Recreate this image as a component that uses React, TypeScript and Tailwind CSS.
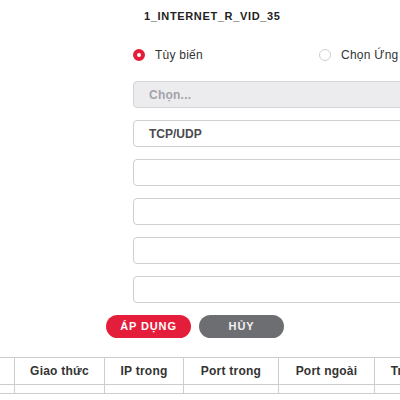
import { Fragment } from 'react'

const fields = ['', 'TCP/UDP', '', '', '', '']

const columns = [
  { label: '', width: 'w-[14px]' },
  { label: 'Giao thức', width: 'w-[90px]' },
  { label: 'IP trong', width: 'w-[79px]' },
  { label: 'Port trong', width: 'w-[95px]' },
  { label: 'Port ngoài', width: 'w-[96px]' },
  { label: 'Trạng thái', width: 'w-[92px]' },
]

const Radio = ({ checked, label }: { checked?: boolean; label: string }) => (
  <div className="flex items-center gap-[10px] shrink-0 whitespace-nowrap">
    {checked ? (
      <span className="w-[12px] h-[12px] shrink-0 rounded-full border-[4px] border-[#e41e3a] bg-white" />
    ) : (
      <span className="w-[12px] h-[12px] shrink-0 rounded-full border border-[#cfcfd2] bg-white" />
    )}
    <span className="text-[12px] leading-[14px] tracking-[0.02em] text-[#333]">{label}</span>
  </div>
)

export default function App() {
  return (
    <div className="w-[400px] h-[400px] overflow-hidden bg-white font-['Liberation_Sans',sans-serif]">
      <div className="h-[32px] flex items-center pl-[144px]">
        <h1 className="text-[11px] font-bold tracking-[0.06em] text-[#222] whitespace-nowrap">
          1_INTERNET_R_VID_35
        </h1>
      </div>

      <div className="mt-[12px] h-[22px] ml-[133px] w-[400px] flex items-center">
        <div className="w-[186px] shrink-0">
          <Radio checked label="Tùy biến" />
        </div>
        <Radio label="Chọn Ứng dụng" />
      </div>

      <div className="mt-[15px] ml-[133px] w-[300px] flex flex-col gap-[12px]">
        <div className="h-[27px] rounded-[4px] border border-[#d4d4d8] bg-[#ececee] flex items-center pl-[15px]">
          <span className="text-[12px] font-bold tracking-[0.02em] text-[#a3a3a8]">Chọn...</span>
        </div>
        {fields.slice(1).map((value, i) => (
          <Fragment key={i}>
            <div className="h-[27px] rounded-[4px] border border-[#cfcfd2] bg-white flex items-center pl-[15px]">
              <span className="text-[12px] font-bold text-[#4a4a4f]">{value}</span>
            </div>
          </Fragment>
        ))}
      </div>

      <div className="mt-[12px] ml-[106px] flex gap-[8px]">
        <button className="w-[85px] h-[23px] rounded-full bg-[#e41e3a] text-white text-[11px] font-bold tracking-[0.08em]">
          ÁP DỤNG
        </button>
        <button className="w-[85px] h-[23px] rounded-full bg-[#6d6e72] text-[#f2f2f2] text-[11px] font-bold tracking-[0.08em]">
          HỦY
        </button>
      </div>

      <div className="mt-[19px] w-[500px] border-t border-[#cdcdd0]">
        <div className="flex h-[27px] border-b border-[#cdcdd0]">
          {columns.map((c, i) => (
            <div
              key={i}
              className={`${c.width} shrink-0 flex items-center justify-center text-[12px] font-bold tracking-[0.02em] text-[#333] whitespace-nowrap ${i > 0 ? 'border-l border-[#cdcdd0]' : ''}`}
            >
              {c.label}
            </div>
          ))}
        </div>
        <div className="flex h-[9px] border-b border-[#cdcdd0]">
          {columns.map((c, i) => (
            <div
              key={i}
              className={`${c.width} shrink-0 ${i > 0 ? 'border-l border-[#cdcdd0]' : ''}`}
            />
          ))}
        </div>
      </div>
    </div>
  )
}
